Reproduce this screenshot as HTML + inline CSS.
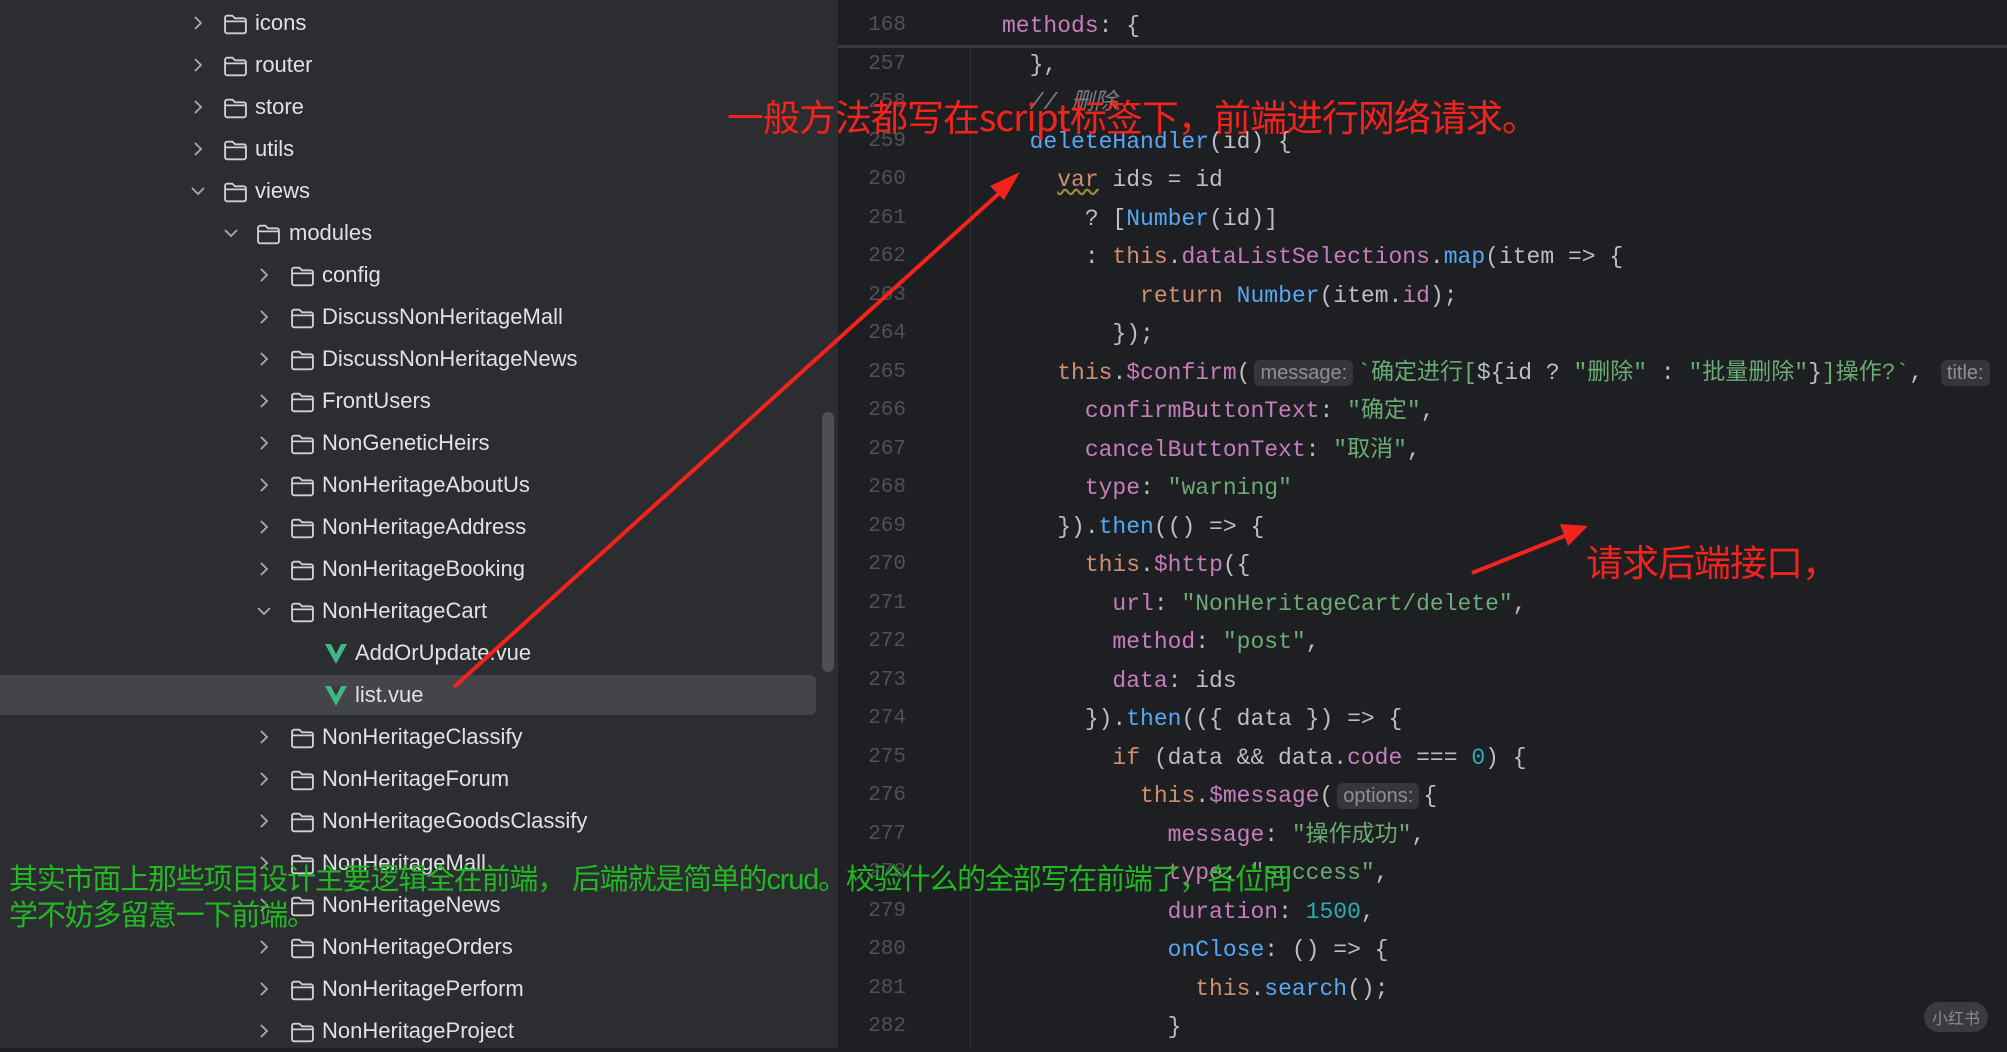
<!DOCTYPE html>
<html><head><meta charset="utf-8"><style>
*{margin:0;padding:0;box-sizing:border-box}
body{width:2007px;height:1048px;overflow:hidden;background:#1e1f22;position:relative;font-family:"Liberation Sans","Noto Sans CJK SC",sans-serif}
#side{position:absolute;left:0;top:0;width:838px;height:1048px;background:#2b2d30}
.r{position:absolute;left:0;height:42px;line-height:42px;font-size:22px;color:#dfe1e5;white-space:nowrap}
.r .t{position:absolute;top:0}
.r svg{position:absolute;top:11px}
.sel{position:absolute;left:0;top:675px;width:816px;height:40px;background:#43454a;border-radius:0 6px 6px 0}
.thumb{position:absolute;left:822px;top:412px;width:12px;height:260px;background:#4d4f53;border-radius:6px}
#ed{position:absolute;left:838px;top:0;width:1169px;height:1048px;background:#1e1f22}
.ln{position:absolute;left:838px;width:68px;text-align:right;font-family:"Liberation Mono",monospace;font-size:21px;color:#4e5157;height:38px;line-height:38px}
.c{position:absolute;left:1002px;font-family:"Liberation Mono","Noto Sans CJK SC",monospace;font-size:23px;color:#bcbec4;white-space:pre;height:38px;line-height:38px}
.k{color:#cf8e6d}.p{color:#c77dbb}.f{color:#56a8f5}.s{color:#6aab73}.n{color:#2aacb8}.g{color:#7a7e85;font-style:italic}
.h{font-family:"Liberation Sans",sans-serif;font-size:20px;color:#8c8f94;background:#34363b;border-radius:6px;padding:2px 6px;margin:0 4px}
.red{position:absolute;color:#f2231d;font-size:37px;font-family:"Noto Sans CJK SC",sans-serif;white-space:nowrap;letter-spacing:-1px}
.grn{position:absolute;left:9px;color:#23b823;font-size:29px;font-family:"Liberation Sans","Noto Sans CJK SC",sans-serif;white-space:nowrap;letter-spacing:-1.2px}
</style></head><body>
<div id="side">
<div class="sel"></div>
<div class="thumb"></div>
</div>
<div id="ed"></div>
<div style="position:absolute;left:838px;top:45px;width:1169px;height:3px;background:#393b40"></div>
<div style="position:absolute;left:970px;top:48px;width:1px;height:1000px;background:#313337"></div>

<svg width="0" height="0" style="position:absolute">
<defs>
<symbol id="fo" viewBox="0 0 24 22"><path d="M2 4.5a2 2 0 0 1 2-2h5l2.5 2.5h8.5a2 2 0 0 1 2 2v10.5a2 2 0 0 1-2 2h-16a2 2 0 0 1-2-2z" fill="none" stroke="#ced0d6" stroke-width="1.8"/><path d="M2 8h20" stroke="#ced0d6" stroke-width="1.6"/></symbol>
<symbol id="cr" viewBox="0 0 20 20"><path d="M7 4l6 6-6 6" fill="none" stroke="#a8abb0" stroke-width="1.8"/></symbol>
<symbol id="cd" viewBox="0 0 20 20"><path d="M4 7l6 6 6-6" fill="none" stroke="#a8abb0" stroke-width="1.8"/></symbol>
<symbol id="v" viewBox="0 0 24 22"><path d="M1 1h6l5 10 5-10h6L12 21z" fill="#41b883"/><path d="M7 1h3.5l1.5 3 1.5-3H17l-5 10z" fill="#2b2d30" opacity=".5"/></symbol>
</defs></svg>

<div class="r" style="top:2px"><svg style="left:188px" width="20" height="20"><use href="#cr"/></svg><svg style="left:223px" width="25" height="23"><use href="#fo"/></svg><span class="t" style="left:255px">icons</span></div>
<div class="r" style="top:44px"><svg style="left:188px" width="20" height="20"><use href="#cr"/></svg><svg style="left:223px" width="25" height="23"><use href="#fo"/></svg><span class="t" style="left:255px">router</span></div>
<div class="r" style="top:86px"><svg style="left:188px" width="20" height="20"><use href="#cr"/></svg><svg style="left:223px" width="25" height="23"><use href="#fo"/></svg><span class="t" style="left:255px">store</span></div>
<div class="r" style="top:128px"><svg style="left:188px" width="20" height="20"><use href="#cr"/></svg><svg style="left:223px" width="25" height="23"><use href="#fo"/></svg><span class="t" style="left:255px">utils</span></div>
<div class="r" style="top:170px"><svg style="left:188px" width="20" height="20"><use href="#cd"/></svg><svg style="left:223px" width="25" height="23"><use href="#fo"/></svg><span class="t" style="left:255px">views</span></div>
<div class="r" style="top:212px"><svg style="left:221px" width="20" height="20"><use href="#cd"/></svg><svg style="left:256px" width="25" height="23"><use href="#fo"/></svg><span class="t" style="left:289px">modules</span></div>
<div class="r" style="top:254px"><svg style="left:254px" width="20" height="20"><use href="#cr"/></svg><svg style="left:290px" width="25" height="23"><use href="#fo"/></svg><span class="t" style="left:322px">config</span></div>
<div class="r" style="top:296px"><svg style="left:254px" width="20" height="20"><use href="#cr"/></svg><svg style="left:290px" width="25" height="23"><use href="#fo"/></svg><span class="t" style="left:322px">DiscussNonHeritageMall</span></div>
<div class="r" style="top:338px"><svg style="left:254px" width="20" height="20"><use href="#cr"/></svg><svg style="left:290px" width="25" height="23"><use href="#fo"/></svg><span class="t" style="left:322px">DiscussNonHeritageNews</span></div>
<div class="r" style="top:380px"><svg style="left:254px" width="20" height="20"><use href="#cr"/></svg><svg style="left:290px" width="25" height="23"><use href="#fo"/></svg><span class="t" style="left:322px">FrontUsers</span></div>
<div class="r" style="top:422px"><svg style="left:254px" width="20" height="20"><use href="#cr"/></svg><svg style="left:290px" width="25" height="23"><use href="#fo"/></svg><span class="t" style="left:322px">NonGeneticHeirs</span></div>
<div class="r" style="top:464px"><svg style="left:254px" width="20" height="20"><use href="#cr"/></svg><svg style="left:290px" width="25" height="23"><use href="#fo"/></svg><span class="t" style="left:322px">NonHeritageAboutUs</span></div>
<div class="r" style="top:506px"><svg style="left:254px" width="20" height="20"><use href="#cr"/></svg><svg style="left:290px" width="25" height="23"><use href="#fo"/></svg><span class="t" style="left:322px">NonHeritageAddress</span></div>
<div class="r" style="top:548px"><svg style="left:254px" width="20" height="20"><use href="#cr"/></svg><svg style="left:290px" width="25" height="23"><use href="#fo"/></svg><span class="t" style="left:322px">NonHeritageBooking</span></div>
<div class="r" style="top:590px"><svg style="left:254px" width="20" height="20"><use href="#cd"/></svg><svg style="left:290px" width="25" height="23"><use href="#fo"/></svg><span class="t" style="left:322px">NonHeritageCart</span></div>
<div class="r" style="top:632px"><svg style="left:324px" width="24" height="22"><use href="#v"/></svg><span class="t" style="left:355px">AddOrUpdate.vue</span></div>
<div class="r" style="top:674px"><svg style="left:324px" width="24" height="22"><use href="#v"/></svg><span class="t" style="left:355px">list.vue</span></div>
<div class="r" style="top:716px"><svg style="left:254px" width="20" height="20"><use href="#cr"/></svg><svg style="left:290px" width="25" height="23"><use href="#fo"/></svg><span class="t" style="left:322px">NonHeritageClassify</span></div>
<div class="r" style="top:758px"><svg style="left:254px" width="20" height="20"><use href="#cr"/></svg><svg style="left:290px" width="25" height="23"><use href="#fo"/></svg><span class="t" style="left:322px">NonHeritageForum</span></div>
<div class="r" style="top:800px"><svg style="left:254px" width="20" height="20"><use href="#cr"/></svg><svg style="left:290px" width="25" height="23"><use href="#fo"/></svg><span class="t" style="left:322px">NonHeritageGoodsClassify</span></div>
<div class="r" style="top:842px"><svg style="left:254px" width="20" height="20"><use href="#cr"/></svg><svg style="left:290px" width="25" height="23"><use href="#fo"/></svg><span class="t" style="left:322px">NonHeritageMall</span></div>
<div class="r" style="top:884px"><svg style="left:254px" width="20" height="20"><use href="#cr"/></svg><svg style="left:290px" width="25" height="23"><use href="#fo"/></svg><span class="t" style="left:322px">NonHeritageNews</span></div>
<div class="r" style="top:926px"><svg style="left:254px" width="20" height="20"><use href="#cr"/></svg><svg style="left:290px" width="25" height="23"><use href="#fo"/></svg><span class="t" style="left:322px">NonHeritageOrders</span></div>
<div class="r" style="top:968px"><svg style="left:254px" width="20" height="20"><use href="#cr"/></svg><svg style="left:290px" width="25" height="23"><use href="#fo"/></svg><span class="t" style="left:322px">NonHeritagePerform</span></div>
<div class="r" style="top:1010px"><svg style="left:254px" width="20" height="20"><use href="#cr"/></svg><svg style="left:290px" width="25" height="23"><use href="#fo"/></svg><span class="t" style="left:322px">NonHeritageProject</span></div>

<div class="ln" style="top:7px">168</div>
<div class="ln" style="top:46px">257</div>
<div class="ln" style="top:84px">258</div>
<div class="ln" style="top:123px">259</div>
<div class="ln" style="top:161px">260</div>
<div class="ln" style="top:200px">261</div>
<div class="ln" style="top:238px">262</div>
<div class="ln" style="top:277px">263</div>
<div class="ln" style="top:315px">264</div>
<div class="ln" style="top:354px">265</div>
<div class="ln" style="top:392px">266</div>
<div class="ln" style="top:431px">267</div>
<div class="ln" style="top:469px">268</div>
<div class="ln" style="top:508px">269</div>
<div class="ln" style="top:546px">270</div>
<div class="ln" style="top:585px">271</div>
<div class="ln" style="top:623px">272</div>
<div class="ln" style="top:662px">273</div>
<div class="ln" style="top:700px">274</div>
<div class="ln" style="top:739px">275</div>
<div class="ln" style="top:777px">276</div>
<div class="ln" style="top:816px">277</div>
<div class="ln" style="top:854px">278</div>
<div class="ln" style="top:893px">279</div>
<div class="ln" style="top:931px">280</div>
<div class="ln" style="top:970px">281</div>
<div class="ln" style="top:1008px">282</div>

<div class="c" style="top:7px"><span class="p">methods</span>: {</div>
<div class="c" style="top:46px">  },</div>
<div class="c" style="top:84px">  <span class="g">// 删除</span></div>
<div class="c" style="top:123px">  <span class="f">deleteHandler</span>(id) {</div>
<div class="c" style="top:161px">    <span class="k" style="text-decoration:underline wavy #a08a3a">var</span> ids = id</div>
<div class="c" style="top:200px">      ? [<span class="f">Number</span>(id)]</div>
<div class="c" style="top:238px">      : <span class="k">this</span>.<span class="p">dataListSelections</span>.<span class="f">map</span>(item =&gt; {</div>
<div class="c" style="top:277px">          <span class="k">return</span> <span class="f">Number</span>(item.<span class="p">id</span>);</div>
<div class="c" style="top:315px">        });</div>
<div class="c" style="top:354px">    <span class="k">this</span>.<span class="p">$confirm</span>(<span class="h">message:</span><span class="s">`确定进行[</span>${id ? <span class="s">"删除"</span> : <span class="s">"批量删除"</span>}<span class="s">]操作?`</span>, <span class="h">title:</span></div>
<div class="c" style="top:392px">      <span class="p">confirmButtonText</span>: <span class="s">"确定"</span>,</div>
<div class="c" style="top:431px">      <span class="p">cancelButtonText</span>: <span class="s">"取消"</span>,</div>
<div class="c" style="top:469px">      <span class="p">type</span>: <span class="s">"warning"</span></div>
<div class="c" style="top:508px">    }).<span class="f">then</span>(() =&gt; {</div>
<div class="c" style="top:546px">      <span class="k">this</span>.<span class="p">$http</span>({</div>
<div class="c" style="top:585px">        <span class="p">url</span>: <span class="s">"NonHeritageCart/delete"</span>,</div>
<div class="c" style="top:623px">        <span class="p">method</span>: <span class="s">"post"</span>,</div>
<div class="c" style="top:662px">        <span class="p">data</span>: ids</div>
<div class="c" style="top:700px">      }).<span class="f">then</span>(({ data }) =&gt; {</div>
<div class="c" style="top:739px">        <span class="k">if</span> (data &amp;&amp; data.<span class="p">code</span> === <span class="n">0</span>) {</div>
<div class="c" style="top:777px">          <span class="k">this</span>.<span class="p">$message</span>(<span class="h">options:</span>{</div>
<div class="c" style="top:816px">            <span class="p">message</span>: <span class="s">"操作成功"</span>,</div>
<div class="c" style="top:854px">            <span class="p">type</span>: <span class="s">"success"</span>,</div>
<div class="c" style="top:893px">            <span class="p">duration</span>: <span class="n">1500</span>,</div>
<div class="c" style="top:931px">            <span class="f">onClose</span>: () =&gt; {</div>
<div class="c" style="top:970px">              <span class="k">this</span>.<span class="f">search</span>();</div>
<div class="c" style="top:1008px">            }</div>

<svg style="position:absolute;left:0;top:0" width="2007" height="1048">
<line x1="454" y1="687" x2="1005" y2="188" stroke="#f2231d" stroke-width="4"/>
<polygon points="1020,172 990,186 1004,200" fill="#f2231d"/>
<line x1="1472" y1="573" x2="1572" y2="533" stroke="#f2231d" stroke-width="4"/>
<polygon points="1588,526 1560,524 1568,546" fill="#f2231d"/>
</svg>
<div class="red" style="left:727px;top:88px">一般方法都写在script标签下，前端进行网络请求。</div>
<div class="red" style="left:1586px;top:533px">请求后端接口，</div>
<div class="grn" style="top:856px">其实市面上那些项目设计主要逻辑全在前端， 后端就是简单的crud。校验什么的全部写在前端了，各位同</div>
<div class="grn" style="top:892px">学不妨多留意一下前端。</div>
<div style="position:absolute;left:1924px;top:1002px;width:64px;height:30px;border-radius:15px;background:#3a3b3e;color:#8a8b8e;font-size:16px;line-height:30px;text-align:center;font-family:'Noto Sans CJK SC',sans-serif">小红书</div>
</body></html>
